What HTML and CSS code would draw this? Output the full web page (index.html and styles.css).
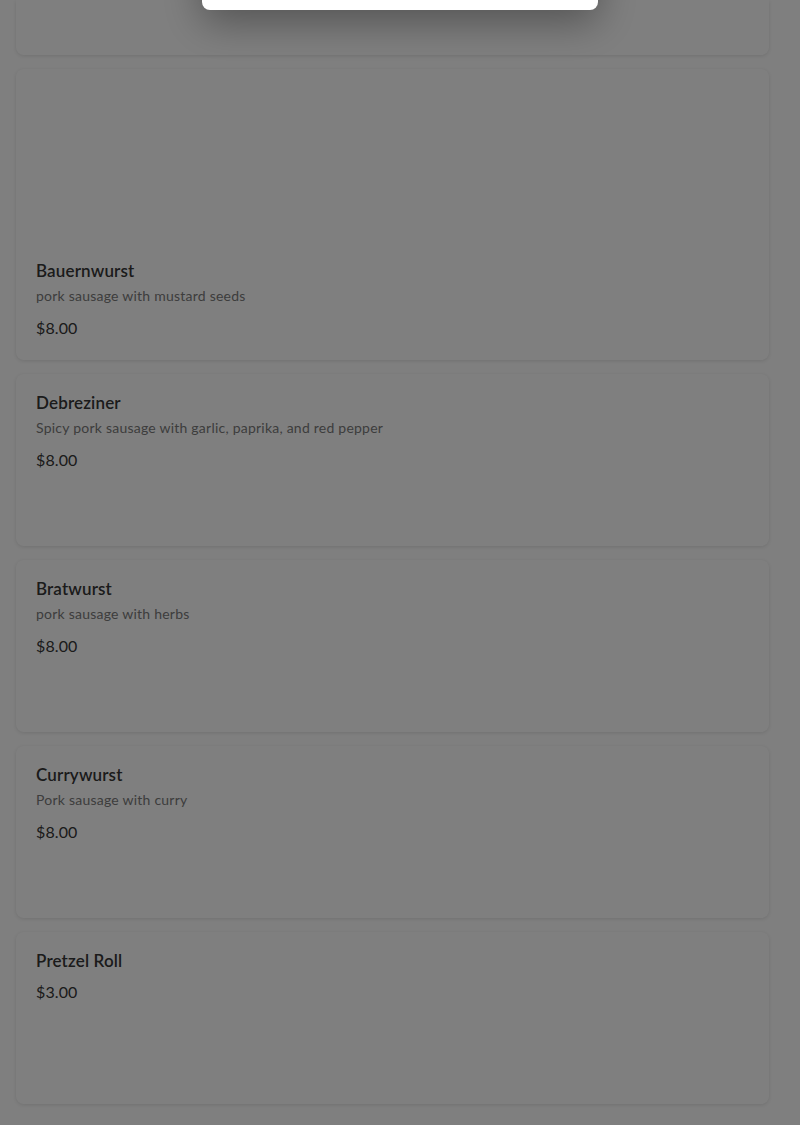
FILE: index.html
```html
<!DOCTYPE html>
<html>
<head>
<meta charset="utf-8">
<link rel="stylesheet" href="styles.css">
</head>
<body>
<main class="list">
  <article class="card card-short card-cut"></article>
  <article class="card">
    <div class="photo"></div>
    <div class="body">
      <h3 class="name">Bauernwurst</h3>
      <p class="desc">pork sausage with mustard seeds</p>
      <p class="price">$8.00</p>
    </div>
  </article>
  <article class="card card-short">
    <h3 class="name">Debreziner</h3>
    <p class="desc">Spicy pork sausage with garlic, paprika, and red pepper</p>
    <p class="price">$8.00</p>
  </article>
  <article class="card card-short">
    <h3 class="name">Bratwurst</h3>
    <p class="desc">pork sausage with herbs</p>
    <p class="price">$8.00</p>
  </article>
  <article class="card card-short">
    <h3 class="name">Currywurst</h3>
    <p class="desc">Pork sausage with curry</p>
    <p class="price">$8.00</p>
  </article>
  <article class="card card-short">
    <h3 class="name">Pretzel Roll</h3>
    <p class="price">$3.00</p>
  </article>
</main>
<div class="overlay"></div>
<div class="modal"></div>
</body>
</html>
```

FILE: styles.css
```css
html, body {
  margin: 0;
  padding: 0;
  background: #ffffff;
  font-family: Lato, "Liberation Sans", sans-serif;
}

.list {
  display: flex;
  flex-direction: column;
  gap: 14px;
  padding: 0 31px 20px 16px;
}

.card {
  background: #ffffff;
  border-radius: 8px;
  box-shadow: 0 1px 4px rgba(0, 0, 0, 0.12);
  display: flex;
  flex-direction: column;
}

.card-short {
  height: 172px;
  box-sizing: border-box;
  padding: 18px 20px 20px;
}

.card-cut {
  height: 55px;
  border-top-left-radius: 0;
  border-top-right-radius: 0;
}

.photo {
  height: 172px;
}

.body {
  padding: 19px 20px 21px;
}

.name {
  margin: 0;
  font-size: 17px;
  line-height: 22px;
  font-weight: 600;
  color: #363636;
  letter-spacing: 0.15px;
}

.desc {
  margin: 4px 0 0;
  font-size: 14px;
  line-height: 20px;
  color: #7a7a7a;
  letter-spacing: 0.23px;
}

.price {
  margin: 11px 0 0;
  font-size: 16px;
  line-height: 22px;
  color: #363636;
  letter-spacing: 0.1px;
}

.name + .price {
  margin-top: 9px;
}

.overlay {
  position: fixed;
  inset: 0;
  background: rgba(0, 0, 0, 0.5);
}

.modal {
  position: fixed;
  left: 202px;
  top: -300px;
  width: 396px;
  height: 310px;
  background: #ffffff;
  border-radius: 8px;
  box-shadow: 0 12px 40px rgba(0, 0, 0, 0.35);
}
```
